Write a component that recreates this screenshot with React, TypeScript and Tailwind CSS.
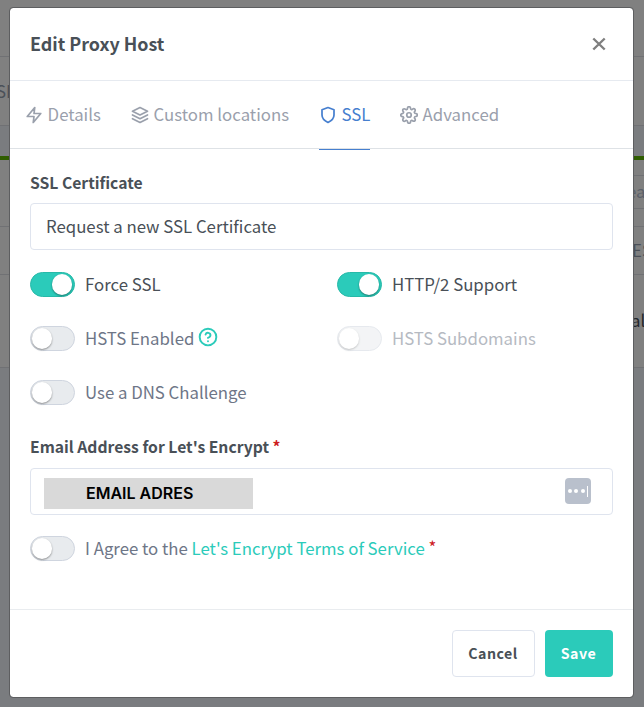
import type { ReactNode } from "react";

const icons: Record<string, ReactNode> = {
  zap: <polygon points="13 2 3 14 12 14 11 22 21 10 12 10 13 2" />,
  layers: (
    <>
      <polygon points="12 2 2 7 12 12 22 7 12 2" />
      <polyline points="2 17 12 22 22 17" />
      <polyline points="2 12 12 17 22 12" />
    </>
  ),
  shield: <path d="M12 22s8-4 8-10V5l-8-3-8 3v7c0 6 8 10 8 10z" />,
  settings: (
    <>
      <circle cx="12" cy="12" r="3" />
      <path d="M19.4 15a1.65 1.65 0 0 0 .33 1.82l.06.06a2 2 0 0 1 0 2.83 2 2 0 0 1-2.83 0l-.06-.06a1.65 1.65 0 0 0-1.82-.33 1.65 1.65 0 0 0-1 1.51V21a2 2 0 0 1-2 2 2 2 0 0 1-2-2v-.09A1.65 1.65 0 0 0 9 19.4a1.65 1.65 0 0 0-1.82.33l-.06.06a2 2 0 0 1-2.83 0 2 2 0 0 1 0-2.83l.06-.06a1.65 1.65 0 0 0 .33-1.82 1.65 1.65 0 0 0-1.51-1H3a2 2 0 0 1-2-2 2 2 0 0 1 2-2h.09A1.65 1.65 0 0 0 4.6 9a1.65 1.65 0 0 0-.33-1.82l-.06-.06a2 2 0 0 1 0-2.83 2 2 0 0 1 2.83 0l.06.06a1.65 1.65 0 0 0 1.82.33H9a1.65 1.65 0 0 0 1-1.51V3a2 2 0 0 1 2-2 2 2 0 0 1 2 2v.09a1.65 1.65 0 0 0 1 1.51 1.65 1.65 0 0 0 1.82-.33l.06-.06a2 2 0 0 1 2.83 0 2 2 0 0 1 0 2.83l-.06.06a1.65 1.65 0 0 0-.33 1.82V9a1.65 1.65 0 0 0 1.51 1H21a2 2 0 0 1 2 2 2 2 0 0 1-2 2h-.09a1.65 1.65 0 0 0-1.51 1z" />
    </>
  ),
  help: (
    <>
      <circle cx="12" cy="12" r="10" />
      <path d="M9.09 9a3 3 0 0 1 5.83 1c0 2-3 3-3 3" />
      <line x1="12" y1="17" x2="12" y2="17.01" />
    </>
  ),
};

function Icon({ name, className }: { name: string; className: string }) {
  return (
    <svg viewBox="0 0 24 24" fill="none" stroke="currentColor" strokeWidth="2.3" strokeLinecap="round" strokeLinejoin="round" className={className}>
      {icons[name]}
    </svg>
  );
}

function Toggle({ on, disabled }: { on?: boolean; disabled?: boolean }) {
  const track = on
    ? "justify-end border-[#27b9a8] bg-[#2bcbba] pr-[2px]"
    : "justify-start border-[#cfd5df] bg-[#e8ebee] pl-[0.5px]";
  return (
    <span className={`flex h-[25px] w-[45px] shrink-0 items-start rounded-full border pt-[1px] ${track} ${disabled ? "opacity-50" : ""}`}>
      <span className="size-[20.5px] rounded-full bg-white shadow-[0_1px_2px_rgba(0,0,0,0.4)]" />
    </span>
  );
}

function Switch({ on, disabled, children }: { on?: boolean; disabled?: boolean; children: ReactNode }) {
  const tone = on ? "text-[#495057]" : disabled ? "text-[#b6bac2]" : "text-[#6e7687]";
  return (
    <label className="flex h-[25px] items-center">
      <Toggle on={on} disabled={disabled} />
      <span className={`mb-[2px] ml-2.5 flex items-center whitespace-pre ${tone}`}>{children}</span>
    </label>
  );
}

function Tab({ icon, label, active, className }: { icon: string; label: string; active?: boolean; className: string }) {
  return (
    <div className={`flex h-[69px] items-center border-b pb-px ${active ? "border-[#467fcf] text-[#467fcf]" : "border-transparent text-[#9aa0ac]"} ${className}`}>
      <Icon name={icon} className="mr-[4.6px] size-[18px] shrink-0" />
      <span className="mb-[2px] whitespace-nowrap">{label}</span>
    </div>
  );
}

function Backdrop() {
  return (
    <div className="flex h-full flex-col bg-[#7a7c7f] text-[#4b5058]">
      <div className="h-[57px] border-b border-[#707174] bg-[#808080]" />
      <div className="flex h-[69px] items-center border-b border-[#707174] bg-[#808080]">
        <span className="-ml-[4px]">SL</span>
      </div>
      <div className="h-[30px]" />
      <div className="h-1 bg-[#2f5d00]" />
      <div className="flex h-[67px] flex-col items-end border-b border-[#707174] bg-[#808080] pt-[15px]">
        <div className="flex h-[34px] w-4 items-center border-y border-[#707174] pb-[2px] text-[#5b616b]">
          <span className="-ml-px">ea</span>
        </div>
      </div>
      <div className="flex h-12 items-center justify-end border-b border-[#707174] bg-[#808080] pb-[2px]">
        <span className="-mr-2 w-5">ES</span>
      </div>
      <div className="flex h-[93px] items-center justify-end border-b border-[#707174] bg-[#808080] pb-[2px] text-[#24282d]">
        <span className="w-[13px]">al</span>
      </div>
    </div>
  );
}

export default function App() {
  return (
    <div className="relative h-[707px] w-[644px] overflow-hidden font-['Noto_Sans_CJK_SC','Noto_Sans',sans-serif] text-[16.8px] leading-6">
      <Backdrop />
      <div className="absolute top-[7px] left-[9px] flex h-[691px] w-[625px] flex-col rounded-[4px] border border-[#5d5e60] bg-white bg-clip-padding">
        <header className="flex h-[73px] shrink-0 items-center justify-between border-b border-[#e6eaf0] px-5">
          <h1 className="mb-[2px] text-[17.9px] font-bold text-[#495057]">Edit Proxy Host</h1>
          <svg viewBox="0 0 14 14" className="mr-[7px] size-[14px] text-[#7f7f7f]" stroke="currentColor" strokeWidth="2.4">
            <path d="M1.3 1.5 L12.7 12.5 M12.7 1.5 L1.3 12.5" />
          </svg>
        </header>
        <nav className="flex h-[68px] shrink-0 border-b border-[#dee2e6] pl-[15px]">
          <Tab icon="zap" label="Details" className="w-[77px]" />
          <Tab icon="layers" label="Custom locations" className="ml-[29px] w-[158px]" />
          <Tab icon="shield" label="SSL" active className="ml-[30px] w-[51px]" />
          <Tab icon="settings" label="Advanced" className="ml-[30px] w-[100px]" />
        </nav>
        <main className="flex h-[460px] shrink-0 flex-col px-5 pt-[22px]">
          <div className="h-6 text-[15.7px] font-bold text-[#495057]">SSL Certificate</div>
          <div className="mt-2 flex h-[47px] shrink-0 items-center rounded-[4px] border border-[#dfe4ee] pb-[2px] pl-[15px] text-[#495057]">
            Request a new SSL Certificate
          </div>
          <div className="mt-[22px] grid grid-cols-[307px_1fr] gap-y-[29px]">
            <Switch on>Force SSL</Switch>
            <Switch on>HTTP/2 Support</Switch>
            <Switch>
              HSTS Enabled
              <Icon name="help" className="mb-px ml-[4px] size-[20px] text-[#2bcbba]" />
            </Switch>
            <Switch disabled>HSTS Subdomains</Switch>
            <Switch>Use a DNS Challenge</Switch>
          </div>
          <div className="mt-[30px] h-6 text-[15.7px] font-bold text-[#495057]">
            Email Address for Let's Encrypt <span className="text-[#cd201f]">*</span>
          </div>
          <div className="mt-[9px] flex h-[47px] shrink-0 items-center justify-between rounded-[4px] border border-[#dfe4ee] pr-[21px] pl-[13px]">
            <div className="mt-[3px] flex h-[31px] w-[209px] items-center bg-[#d9d9d9] pl-[42px] font-['Inter',sans-serif] text-[16px] font-semibold text-black">
              EMAIL ADRES
            </div>
            <div className="mb-px flex size-[26px] items-center justify-center gap-[2.3px] rounded-[4px] bg-[#b9c0cc]">
              <span className="size-1 rounded-full bg-white" />
              <span className="size-1 rounded-full bg-white" />
              <span className="size-1 rounded-full bg-white" />
              <span className="h-[11px] w-px bg-white" />
            </div>
          </div>
          <div className="mt-[21px]">
            <Switch>
              <span>I Agree to the </span>
              <span className="text-[#2bcbba]">Let's Encrypt Terms of Service</span>
              <span className="mb-px text-[#cd201f]"> *</span>
            </Switch>
          </div>
        </main>
        <footer className="flex grow items-center justify-end gap-2.5 border-t border-[#e9ecef] pr-5 text-[14.2px] font-bold tracking-[0.5px]">
          <button className="h-[47px] w-[83px] rounded-[4px] border border-[#dfe4ee] pr-px pb-px text-[#495057]">Cancel</button>
          <button className="h-[47px] w-[68px] rounded-[4px] bg-[#2bcbba] pr-px pb-px text-white">Save</button>
        </footer>
      </div>
    </div>
  );
}
